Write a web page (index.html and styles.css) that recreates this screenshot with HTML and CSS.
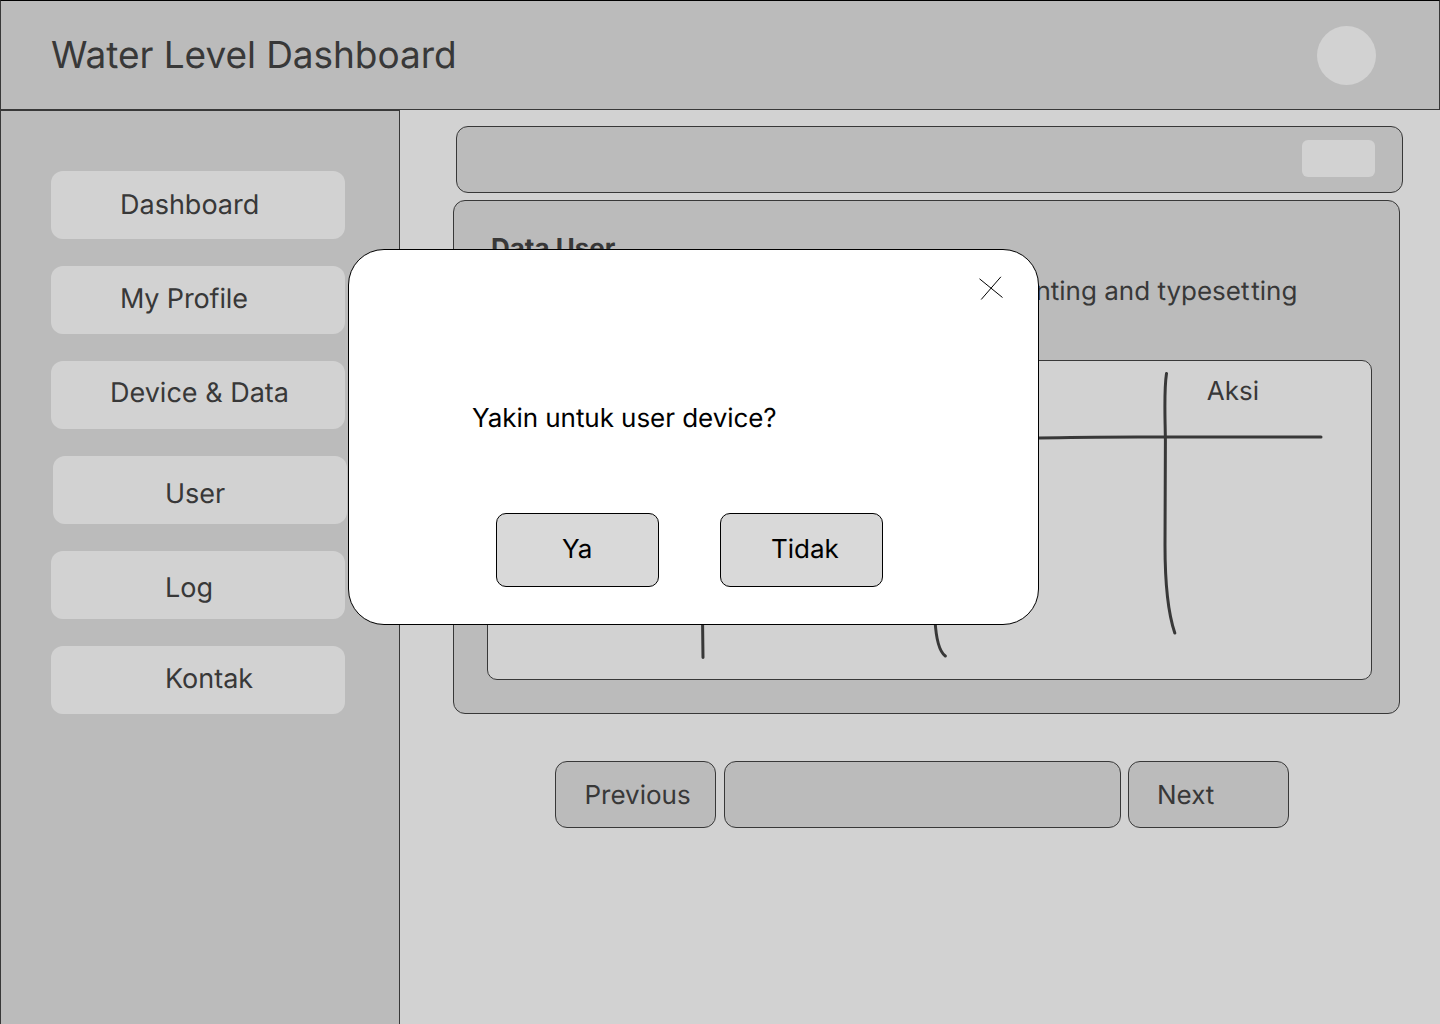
FILE: index.html
```html
<!DOCTYPE html>
<html lang="id">
<head>
<meta charset="utf-8">
<title>Water Level Dashboard</title>
<link rel="stylesheet" href="styles.css">
</head>
<body>
<div class="app">
  <header class="header">
    <h1 class="title">Water Level Dashboard</h1>
    <div class="avatar"></div>
  </header>
  <div class="body">
    <nav class="sidebar">
      <a class="nav nav-dashboard">Dashboard</a>
      <a class="nav nav-profile">My Profile</a>
      <a class="nav nav-device">Device &amp; Data</a>
      <a class="nav nav-user">User</a>
      <a class="nav nav-log">Log</a>
      <a class="nav nav-kontak">Kontak</a>
    </nav>
    <main class="main">
      <div class="toolbar"><div class="chip"></div></div>
      <section class="panel">
        <h2 class="panel-title">Data User</h2>
        <p class="panel-text">Lorem Ipsum is simply dummy text of the printing and typese<span class="loose">t</span>ting</p>
        <div class="table">
          <svg class="rules" width="883" height="318" viewBox="488 361 883 318">
            <path d="M520 440C700 438 900 440 1039 438C1090 436.5 1140 436.8 1180 437H1321"/>
            <path d="M1166.5 373.5C1163.8 391 1165 412 1165.4 440L1165 545C1165 585 1168 613 1174.8 633"/>
            <path d="M702.5 380L702.6 625L703 657.5"/>
            <path d="M935 380V620C936 638 938.500 651 945.300 656"/>
          </svg>
          <span class="column">Aksi</span>
        </div>
      </section>
      <div class="pager">
        <a class="page prev">Previous</a>
        <div class="page numbers"></div>
        <a class="page next">Next</a>
      </div>
    </main>
  </div>
  <div class="modal">
    <svg class="close" width="26" height="26" viewBox="0 0 26 26"><path d="M1.500 3.800L24.500 22.500M22.900 1.800L3.200 24.500"/></svg>
    <p class="question">Yakin untuk user device?</p>
    <div class="actions">
      <button class="btn yes">Ya</button>
      <button class="btn no">Tidak</button>
    </div>
  </div>
</div>
</body>
</html>
```
FILE: styles.css
```css
* { box-sizing: border-box; }
body { margin: 0; font-family: Inter, sans-serif; color: #383838; background: #d2d2d2; text-rendering: geometricPrecision; font-variant-ligatures: none; }
h1, h2, p { margin: 0; font-weight: 400; }
.app { position: relative; width: 1440px; height: 1024px; overflow: hidden; display: flex; flex-direction: column; }
.header { height: 110px; flex: none; display: flex; justify-content: space-between; align-items: flex-start; padding: 25px 63px 0 50px; background: #bbb; border: 1px solid #383838; border-top-color: #000; }
.title { font-size: 37px; line-height: 58px; letter-spacing: -0.05px; white-space: nowrap; }
.avatar { width: 59px; height: 59px; border-radius: 50%; background: #d2d2d2; }
.body { flex: 1; display: flex; min-height: 0; }
.sidebar { width: 400px; flex: none; display: flex; flex-direction: column; gap: 27px; padding: 60px 0 0 50px; background: #bbb; border: 1px solid #383838; border-bottom: 0; }
.nav { width: 294px; height: 68px; flex: none; border-radius: 12px; background: #d2d2d2; font-size: 27px; line-height: 34px; white-space: nowrap; }
.nav-dashboard { padding: 17px 0 0 69px; }
.nav-profile { padding: 16px 0 0 69px; letter-spacing: -0.15px; }
.nav-device { padding: 15px 0 0 59px; }
.nav-user { padding: 21px 0 0 112px; margin-left: 2px; }
.nav-log { padding: 20px 0 0 114px; }
.nav-kontak { padding: 16px 0 0 114px; }
.main { flex: 1; padding: 16px 0 0 53px; }
.toolbar { width: 947px; height: 67px; margin-left: 3px; padding: 13px 27px 0 0; display: flex; justify-content: flex-end; background: #bbb; border: 1px solid #383838; border-radius: 12px; }
.chip { width: 73px; height: 37px; border-radius: 6px; background: #d2d2d2; }
.panel { width: 947px; height: 514px; margin-top: 7px; padding: 32px 27px 0 33px; background: #bbb; border: 1px solid #383838; border-radius: 12px; }
.panel-title { margin-left: 4px; font-size: 26px; line-height: 32px; font-weight: 700; }
.panel-text { margin: 11px 0 0 4px; font-size: 26px; line-height: 32px; white-space: nowrap; }
.loose { letter-spacing: 1.8px; }
.table { position: relative; width: 885px; height: 320px; margin-top: 52px; padding: 15px 112px 0 0; display: flex; justify-content: flex-end; background: #d2d2d2; border: 1px solid #383838; border-radius: 10px; }
.rules { position: absolute; left: 0; top: 0; fill: none; stroke: #383838; stroke-width: 3; stroke-linecap: round; }
.column { font-size: 26px; line-height: 32px; }
.pager { display: flex; margin: 47px 0 0 102px; }
.page { height: 67px; padding: 18px 0 0 28px; background: #bbb; border: 1px solid #383838; border-radius: 12px; font-size: 26px; line-height: 32px; }
.prev, .next { width: 161px; }
.prev { padding-left: 28.5px; }
.numbers { width: 397px; margin: 0 7px 0 8px; }
.modal { position: absolute; left: 348px; top: 249px; width: 691px; height: 376px; display: flex; flex-direction: column; padding: 25px 34px 0 123px; background: #fff; border: 1px solid #000; border-radius: 36px; color: #000; }
.close { align-self: flex-end; fill: none; stroke: #000; stroke-width: 1; }
.question { margin-top: 102px; font-size: 26px; line-height: 32px; letter-spacing: -0.06px; }
.actions { display: flex; gap: 61px; margin: 78px 0 0 24px; }
.btn { width: 163px; height: 74px; display: block; padding: 0; background: #d9d9d9; border: 1px solid #000; border-radius: 10px; color: #000; font: 26px/32px Inter, sans-serif; text-align: left; text-rendering: inherit; }
.yes { padding-left: 65px; }
.no { padding-left: 50px; }
```
